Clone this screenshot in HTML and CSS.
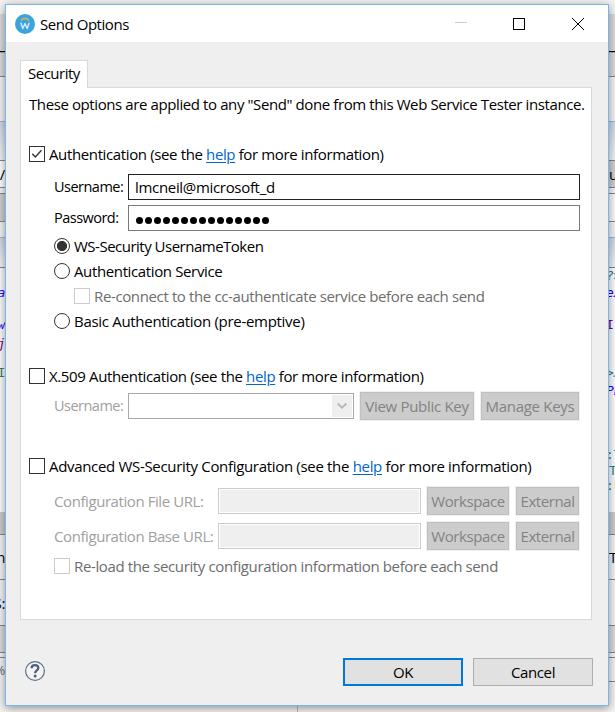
FILE: index.html
```html
<!DOCTYPE html>
<html lang="en">
<head>
<meta charset="utf-8">
<title>Send Options</title>
<link rel="stylesheet" href="styles.css">
</head>
<body>
<div class="backdrop">
  <div class="band h14 pale"></div>
  <div class="band h37 bar"></div>
  <div class="band h2 black"></div>
  <div class="band h24 bar line"></div>
  <div class="band h45 pale blueline"></div>
  <div class="band h39 fade line"></div>
  <div class="band h27 split line"><span class="ui">/</span><span class="ui">u</span></div>
  <div class="band h6 pale line"></div>
  <div class="band h28 splitleft line"></div>
  <div class="band h16 pale blueline"></div>
  <div class="band h30 fade line"></div>
  <div class="band code h16 white"><span></span><span class="teal shift">?&gt;</span></div>
  <div class="band code h18 white"><span class="blue">a</span><span class="blue shift">ex</span></div>
  <div class="band h14 white"></div>
  <div class="band code h18 white"><span class="blue">w</span><span class="purple upright shift">Ir</span></div>
  <div class="band code h20 white"><span class="purple">_j</span><span></span></div>
  <div class="band h10 white"></div>
  <div class="band code h18 white"><span class="green">I</span><span class="teal shift">&gt;J</span></div>
  <div class="band code h18 white"><span></span><span class="blue shift">Pk</span></div>
  <div class="band h47 white"></div>
  <div class="band code h16 white"><span></span><span class="teal upright shift">:T</span></div>
  <div class="band code h15 white"><span></span><span class="teal upright">Te</span></div>
  <div class="band code h16 white"><span></span><span class="teal upright shift">:F</span></div>
  <div class="band h18 white"></div>
  <div class="band h23 thumb line"></div>
  <div class="band h45 pale line"><span class="ui">n</span><span class="ui">T</span></div>
  <div class="band h46 pale line"><span class="ui navy">S:</span><span></span></div>
  <div class="band h27 bar line"></div>
  <div class="band h5 pale line"></div>
  <div class="band h24 pale halfline"><span class="ui small">%</span><span></span></div>
  <div class="band h31 pale foot"></div>
</div>

<main class="window">
  <header class="titlebar">
    <svg class="logo" width="20" height="20" viewBox="0 0 20 20"><circle cx="10" cy="10" r="10" fill="#3ba4dc"/><path d="M6 6.500a4.800 4.800 0 0 1 8 0" fill="none" stroke="#c9b45e" stroke-width="1.600"/><path d="M5.800 8.800 7.800 14.500 10 9.500 12.200 14.500 14.200 8.800" fill="none" stroke="#d0e8f5" stroke-width="1.500" stroke-linejoin="round"/></svg>
    <h1 class="title">Send Options</h1>
    <svg class="controls" width="131" height="14" viewBox="0 0 131 14" fill="none" shape-rendering="crispEdges"><path d="M0 5.500h12" stroke="#ccc"/><rect x="58.500" y="1.500" width="11" height="11" stroke="#000"/><path d="m117 1 12 12m0-12-12 12" stroke="#000" shape-rendering="auto"/></svg>
  </header>

  <div class="content">
    <div class="tab">Security</div>
    <section class="panel">
      <p class="intro">These options are applied to any "Send" done from this Web Service Tester instance.</p>

      <div class="heading first"><span class="check"><svg width="14" height="14" viewBox="0 0 14 14" fill="none"><path d="m2.300 6.800 3 3.200 6.200-6.700" stroke="#333" stroke-width="1.400"/></svg></span><span>Authentication (see the <a>help</a> for more information)</span></div>
      <div class="group">
        <div class="field"><span class="label">Username:</span><span class="input focused">lmcneil@microsoft_d</span></div>
        <div class="field"><span class="label">Password:</span><span class="input"><span class="dots"><i></i><i></i><i></i><i></i><i></i><i></i><i></i><i></i><i></i><i></i><i></i><i></i><i></i><i></i><i></i></span></span></div>
        <div class="option top"><span class="radio on"></span><span>WS-Security UsernameToken</span></div>
        <div class="option"><span class="radio"></span><span>Authentication Service</span></div>
        <div class="option nested"><span class="check off"></span><span>Re-connect to the cc-authenticate service before each send</span></div>
        <div class="option basic"><span class="radio"></span><span>Basic Authentication (pre-emptive)</span></div>
      </div>

      <div class="heading second"><span class="check"></span><span>X.509 Authentication (see the <a>help</a> for more information)</span></div>
      <div class="keys">
        <span class="label dim">Username:</span>
        <span class="combo"><span class="arrow"><svg width="10" height="8" viewBox="0 0 10 8" fill="none"><path d="m.700 1.500 4.300 4.300 4.300-4.300" stroke="#b5b5b5" stroke-width="1.800"/></svg></span></span>
        <span class="btn view">View Public Key</span>
        <span class="btn manage">Manage Keys</span>
      </div>

      <div class="heading third"><span class="check"></span><span>Advanced WS-Security Configuration (see the <a>help</a> for more information)</span></div>
      <div class="config">
        <span class="dim">Configuration File URL:</span><span class="blank"></span><span class="btn">Workspace</span><span class="btn">External</span>
        <span class="dim">Configuration Base URL:</span><span class="blank"></span><span class="btn">Workspace</span><span class="btn">External</span>
      </div>
      <div class="option reload"><span class="check off"></span><span>Re-load the security configuration information before each send</span></div>
    </section>
  </div>

  <footer class="footer">
    <svg class="help" width="22" height="22" viewBox="0 0 22 22" fill="none"><circle cx="11" cy="11" r="9.400" fill="#f4f4f5" stroke="#5c6e8c" stroke-width="1.200"/><path d="M7.600 8.200C7.600 4 14.300 4.200 14.300 8c0 2.500-3.200 2.400-3.200 5.200" stroke="#4b5f82" stroke-width="2.300"/><circle cx="11.100" cy="16.100" r="1.500" fill="#4b5f82"/></svg>
    <span class="action primary">OK</span>
    <span class="action">Cancel</span>
  </footer>
</main>
</body>
</html>
```
FILE: styles.css
```css
* { box-sizing: border-box; }

body {
  margin: 0;
  width: 615px;
  height: 712px;
  overflow: hidden;
  display: grid;
  font: 15px/20px "Open Sans", "Noto Sans", sans-serif;
  letter-spacing: -0.37px;
  color: #000;
  white-space: nowrap;
}

/* Application behind the dialog, visible only along its edges */
.backdrop, .window { grid-area: 1 / 1; }
.backdrop { height: 712px; overflow: hidden; }
.band { display: flex; justify-content: space-between; align-items: center; }
.band span { width: 5px; display: flex; justify-content: flex-end; }
.band span:last-child { width: 6px; justify-content: flex-start; }
.band .shift { text-indent: -3px; }
.h2 { height: 2px; } .h5 { height: 5px; } .h6 { height: 6px; } .h10 { height: 10px; }
.h14 { height: 14px; } .h15 { height: 15px; } .h16 { height: 16px; } .h18 { height: 18px; }
.h20 { height: 20px; } .h23 { height: 23px; } .h24 { height: 24px; }
.h27 { height: 27px; } .h28 { height: 28px; } .h30 { height: 30px; }
.h31 { height: 31px; } .h37 { height: 37px; } .h39 { height: 39px; }
.h45 { height: 45px; } .h46 { height: 46px; } .h47 { height: 47px; }
.pale { background: #f4f4f4; }
.white { background: #fdfdfd; }
.bar { background: #dcdcdc; }
.thumb { background: #cdcdcd; }
.black { background: #000; border-bottom: 1px solid #aaa; }
.fade { background: linear-gradient(#cfd8e6, #f4f4f4); }
.split { background: linear-gradient(90deg, #fff 50%, #d0d0d0 50%); }
.splitleft { background: linear-gradient(90deg, #d0d0d0 50%, #fbfbfb 50%); }
.line { border-bottom: 1px solid #888; }
.blueline { border-bottom: 1px solid #a3b4ce; }
.halfline { background: linear-gradient(90deg, transparent 50%, #888 50%) bottom / 100% 1px no-repeat #f4f4f4; }
.foot { background: linear-gradient(#bbb, #bbb) 297px 0 / 1px 100% no-repeat #f4f4f4; }
.code { font: italic 13px/16px "DejaVu Sans Mono", monospace; }
.upright { font-style: normal; }
.small { font-size: 13px; color: #666; }
.teal { color: #3f7f7f; }
.blue { color: #2a00ff; }
.purple { color: #7f007f; }
.green { color: #3f7f5f; font-style: normal; }
.navy { color: #003; }

/* Dialog */
.window {
  width: 604px;
  height: 702px;
  margin: 4px 0 0 5px;
  border: 1px solid #79b5ee;
  background: #efefef;
  box-shadow: 0 2px 9px rgba(0, 0, 0, .42);
  display: flex;
  flex-direction: column;
}
.titlebar { height: 37px; background: #fff; display: flex; align-items: center; padding: 0 22px 0 9px; }
.title { font-size: 15px; font-weight: 400; letter-spacing: -0.45px; margin: 0 0 0 5px; flex: 1; }
.content { padding: 18px 16px 0 14px; }
.tab {
  width: 68px;
  height: 28px;
  margin-bottom: -1px;
  padding: 2px 0 0 7px;
  background: #fff;
  border: 1px solid #d9d9d9;
  border-bottom: 0;
  letter-spacing: -0.5px;
  position: relative;
}
.panel { height: 533px; background: #fff; border: 1px solid #d9d9d9; padding: 0 11px 0 8px; }
.intro { margin: 0; height: 34px; line-height: 33px; letter-spacing: -0.4px; }
.heading, .option { display: flex; align-items: center; gap: 4px; }
.heading { height: 24px; }
.first { margin-top: 20px; }
.second { margin-top: 31px; }
.third { margin-top: 33px; letter-spacing: -0.32px; }
a { color: #0066cc; text-decoration: underline; text-underline-offset: 2px; }
.check { width: 16px; height: 16px; border: 1px solid #333; background: #fff; flex: none; display: block; }
.check svg { display: block; }
.off { border-color: #ccc; }
.group { padding-left: 25px; padding-top: 8px; }
.field { display: flex; align-items: center; height: 26px; margin-bottom: 5px; }
.label { width: 74px; font-size: 14.5px; letter-spacing: -0.52px; }
.input { flex: 1; height: 26px; border: 1px solid #7a7a7a; padding: 2px 6px; letter-spacing: -0.32px; }
.focused { border-color: #222; }
.dots { display: flex; gap: 2px; padding: 9px 0 0 1px; }
.dots i { width: 7px; height: 7px; border-radius: 50%; background: #000; }
.option { height: 25px; }
.top { margin-top: -3px; letter-spacing: -0.5px; }
.nested { padding-left: 20px; color: #6d6d6d; }
.basic { letter-spacing: -0.3px; }
.radio { width: 16px; height: 16px; border: 1px solid #333; border-radius: 50%; flex: none; }
.on { background: radial-gradient(circle, #333 4.700px, #fff 5.400px); }
.dim { color: #a0a0a0; }
.keys { height: 30px; margin-top: 3px; padding-left: 25px; display: flex; align-items: center; }
.combo { width: 226px; height: 26px; margin-top: -1px; border: 1px solid #a9a9ac; padding: 1px; display: flex; justify-content: flex-end; }
.arrow { width: 20px; background: #efefef; display: grid; place-items: center; }
.btn {
  height: 28px;
  background: #ccc;
  border: 1px solid #bfbfbf;
  outline: 1px solid #f0f0f0;
  color: #838383;
  line-height: 27px;
  text-align: center;
}
.view { width: 114px; margin-left: 6px; letter-spacing: -0.3px; }
.manage { width: 98px; margin-left: 7px; letter-spacing: -0.3px; }
.config {
  margin-top: 8px;
  padding-left: 25px;
  display: grid;
  grid-template-columns: 164px 209px 89px 63px;
  grid-auto-rows: 30px;
  row-gap: 5px;
  align-items: center;
  letter-spacing: -0.42px;
}
.config .btn:nth-child(4n + 3) { width: 82px; }
.blank { width: 203px; height: 26px; border: 1px solid #ccc; background: #efefef; box-shadow: inset 0 0 0 1px #fff; }
.reload { margin: 2px 0 0 25px; color: #6d6d6d; }
.footer { display: flex; padding: 38px 15px 0 18px; }
.help { margin-top: 2px; }
.action {
  width: 120px;
  height: 28px;
  border: 1px solid #adadad;
  background: #e1e1e1;
  text-align: center;
  line-height: 27px;
  margin-left: 10px;
}
.primary { border: 2px solid #0078d7; line-height: 25px; margin-left: auto; }
```
